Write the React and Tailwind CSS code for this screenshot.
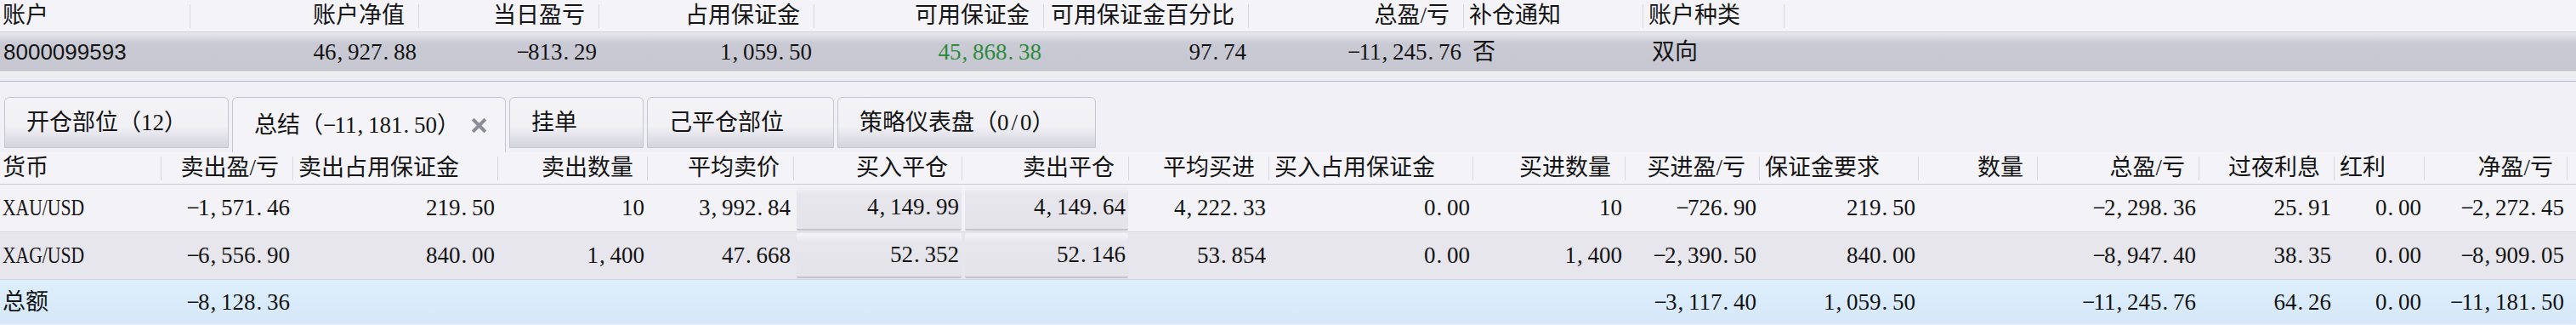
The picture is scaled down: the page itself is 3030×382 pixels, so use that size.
const topCols = [
  { w: 'w-[224px]', head: '账户', val: '8000099593', left: true, sans: true },
  { w: 'w-[269px]', head: '账户净值', val: '46,927.88' },
  { w: 'w-[212px]', head: '当日盈亏', val: '-813.29' },
  { w: 'w-[253px]', head: '占用保证金', val: '1,059.50' },
  { w: 'w-[270px]', head: '可用保证金', val: '45,868.38', green: true },
  { w: 'w-[241px]', head: '可用保证金百分比', val: '97.74' },
  { w: 'w-[253px]', head: '总盈/亏', val: '-11,245.76' },
  { w: 'w-[211px]', head: '补仓通知', val: '否', left: true },
  { w: 'w-[166px]', head: '账户种类', val: '双向', left: true },
];

const cols = [
  { w: 'w-[190px]', head: '货币', left: true },
  { w: 'w-[155px]', head: '卖出盈/亏' },
  { w: 'w-[241px]', head: '卖出占用保证金', headLeft: true },
  { w: 'w-[176px]', head: '卖出数量' },
  { w: 'w-[172px]', head: '平均卖价' },
  { w: 'w-[198px]', head: '买入平仓', box: true },
  { w: 'w-[196px]', head: '卖出平仓', box: true },
  { w: 'w-[165px]', head: '平均买进' },
  { w: 'w-[240px]', head: '买入占用保证金', headLeft: true },
  { w: 'w-[179px]', head: '买进数量' },
  { w: 'w-[158px]', head: '买进盈/亏' },
  { w: 'w-[187px]', head: '保证金要求', headLeft: true },
  { w: 'w-[140px]', head: '数量' },
  { w: 'w-[190px]', head: '总盈/亏' },
  { w: 'w-[159px]', head: '过夜利息' },
  { w: 'w-[106px]', head: '红利', headLeft: true },
  { w: 'w-[168px]', head: '净盈/亏' },
];

const rows = [
  {
    bg: 'bg-[#f2f2f7]',
    h: 'h-[56px]',
    cells: ['XAU/USD', '-1,571.46', '219.50', '10', '3,992.84', '4,149.99', '4,149.64', '4,222.33', '0.00', '10', '-726.90', '219.50', '', '-2,298.36', '25.91', '0.00', '-2,272.45'],
  },
  {
    bg: 'bg-[#e6e6ec]',
    h: 'h-[56px]',
    cells: ['XAG/USD', '-6,556.90', '840.00', '1,400', '47.668', '52.352', '52.146', '53.854', '0.00', '1,400', '-2,390.50', '840.00', '', '-8,947.40', '38.35', '0.00', '-8,909.05'],
  },
  {
    bg: 'bg-[linear-gradient(to_bottom,#ddeefc,#d6e8f9)]',
    h: 'h-[52px]',
    total: true,
    cells: ['总额', '-8,128.36', '', '', '', '', '', '', '', '', '-3,117.40', '1,059.50', '', '-11,245.76', '64.26', '0.00', '-11,181.50'],
  },
];

const tabs = [
  { label: '开仓部位（12）', w: 'w-[264px]' },
  { label: '总结（-11,181.50）', w: 'w-[322px]', active: true },
  { label: '挂单', w: 'w-[158px]' },
  { label: '己平仓部位', w: 'w-[220px]' },
  { label: '策略仪表盘（0/0）', w: 'w-[304px]' },
];

// SimSun-style half-width cells for punctuation inside numbers
function Num({ s }) {
  return (
    <span className="whitespace-nowrap">
      {[...s].map((ch, i) => {
        if (ch === '-') return <span key={i} className="inline-block w-[13.5px] text-center">−</span>;
        if (ch === ',' || ch === '.' || ch === '/')
          return <span key={i} className={`inline-block w-[13.5px] ${ch === '/' ? 'text-center' : 'pl-[1px]'}`}>{ch}</span>;
        return ch;
      })}
    </span>
  );
}

function Cell({ v }) {
  if (!v) return null;
  if (/^[A-Z]{3}\/[A-Z]{3}$/.test(v)) return <span className="inline-block origin-left scale-x-[0.8]">{v}</span>;
  return <Num s={v} />;
}

const Sep = () => <div className="absolute right-0 top-[5px] h-[28px] w-px bg-[#d7d7df]" />;

function CloseIcon() {
  return (
    <svg width="17" height="17" viewBox="0 0 17 17" className="shrink-0">
      <path d="M2.5 2.5 L14.5 14.5 M14.5 2.5 L2.5 14.5" stroke="#8c8c96" strokeWidth="4" strokeLinecap="square" />
    </svg>
  );
}

export default function App() {
  return (
    <div className="w-[3030px] h-[382px] overflow-hidden bg-[#f0f0f6] text-[27px] leading-none text-[#141414] font-['Liberation_Serif','Noto_Sans_CJK_SC',serif]">
      {/* account summary */}
      <div className="flex h-[38px] bg-[#f3f3f8] border-b border-[#cdcdd6]">
        {topCols.map((c, i) => (
          <div
            key={i}
            className={`relative flex items-center shrink-0 ${c.w} ${c.left ? (i === 0 ? 'pl-[3px]' : 'pl-[6px]') : 'justify-end pr-[17px]'}`}
          >
            {c.head}
            <Sep />
          </div>
        ))}
      </div>
      <div className="flex h-[47px] bg-[linear-gradient(to_bottom,#e8e8ee_0%,#cacad5_28%,#c7c7d2_100%)] border-b border-white">
        {topCols.map((c, i) => (
          <div
            key={i}
            className={`flex items-center shrink-0 ${c.w} ${c.left ? (i === 0 ? 'pl-[4px]' : 'pl-[10px]') : 'justify-end pr-[3px]'} ${c.green ? 'text-[#2e8b3d]' : ''}`}
          >
            {c.sans ? (
              <span className="font-['Liberation_Sans',sans-serif] text-[26px]">{c.val}</span>
            ) : (
              <Num s={c.val} />
            )}
          </div>
        ))}
      </div>
      <div className="h-[11px] bg-[#ececf2] border-b border-[#b9b9c6]" />

      {/* tabs */}
      <div className="flex h-[83px] gap-[4px] pl-[5px] pt-[18px] bg-[#f0f0f6]">
        {tabs.map((t, i) => (
          <div
            key={i}
            className={`flex items-center shrink-0 pl-[25px] rounded-t-[6px] border border-[#c6c6d0] ${t.w} ${
              t.active
                ? 'h-[65px] border-b-0 bg-[#f3f3f8]'
                : 'h-[60px] bg-[linear-gradient(to_bottom,#f4f4f8_0%,#f0f0f5_58%,#d4d4dd_100%)]'
            }`}
          >
            <Num s={t.label} />
            {t.active && (
              <span className="ml-auto mr-[22px] flex">
                <CloseIcon />
              </span>
            )}
          </div>
        ))}
      </div>

      {/* summary table header */}
      <div className="flex h-[38px] bg-[#f3f3f8] border-b border-[#c9c9d2]">
        {cols.map((c, i) => (
          <div
            key={i}
            className={`relative flex items-center shrink-0 ${c.w} ${
              c.left ? 'pl-[3px]' : c.headLeft ? 'pl-[6px]' : 'justify-end pr-[17px]'
            }`}
          >
            {c.head}
            <Sep />
          </div>
        ))}
      </div>

      {rows.map((r, ri) => (
        <div key={ri} className={`flex ${r.h} ${r.bg} ${ri < 2 ? 'border-b border-[#d6d6de]' : ''}`}>
          {cols.map((c, i) => {
            const v = r.cells[i];
            if (c.box && !r.total) {
              return (
                <div key={i} className={`flex shrink-0 ${c.w} pl-[3px] pr-[1px] py-[1px]`}>
                  <div className="flex flex-1 items-center justify-end pr-[3px] rounded-[2px] border-b-2 border-[#c3c3cd] bg-[linear-gradient(to_bottom,#f4f4f8_0%,#e6e6ec_22%,#e3e3e9_100%)]">
                    <Cell v={v} />
                  </div>
                </div>
              );
            }
            return (
              <div
                key={i}
                className={`flex items-center shrink-0 ${c.w} ${c.left ? 'pl-[3px]' : 'justify-end pr-[4px]'}`}
              >
                <Cell v={v} />
              </div>
            );
          })}
        </div>
      ))}
    </div>
  );
}
